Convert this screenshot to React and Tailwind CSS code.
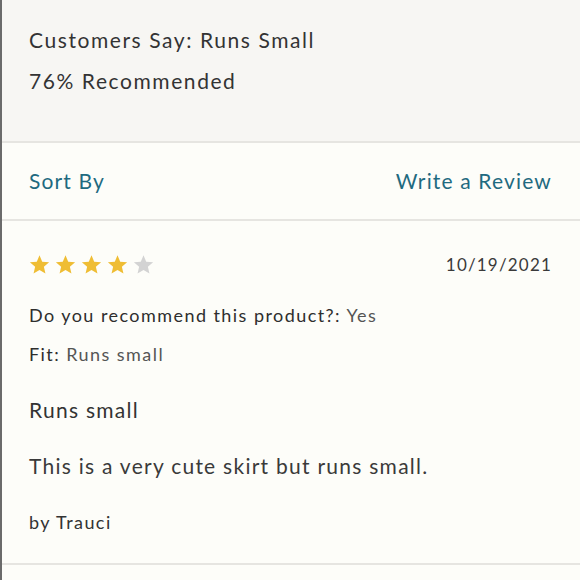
import React from "react";

const Star = ({ filled }) => (
  <svg
    className={`w-[21px] h-[21px] ${filled ? "text-[#efbd34]" : "text-[#d3d3d3]"}`}
    viewBox="0 0 24 24"
    fill="currentColor"
  >
    <path d="M12 1.5l3.09 7.26 7.91.66-6 5.2 1.8 7.73L12 18.3l-6.8 4.05 1.8-7.73-6-5.2 7.91-.66z" />
  </svg>
);

const App = () => {
  const rating = 4;

  return (
    <div
      className="w-[580px] h-[580px] overflow-hidden bg-[#fdfdf9] border-l-2 border-[#6b6b6b] text-[#333]"
      style={{ fontFamily: "Lato, 'Open Sans', sans-serif" }}
    >
      {/* Summary */}
      <div className="bg-[#f7f6f3] h-[143px] px-[27px] pt-[26px] border-b-2 border-[#e6e5e1]">
        <p className="text-[21px] leading-[28px] tracking-[0.075em]">Customers Say: Runs Small</p>
        <p className="text-[21px] leading-[28px] tracking-[0.075em] mt-[13px]">76% Recommended</p>
      </div>

      {/* Actions */}
      <div className="h-[78px] px-[27px] flex items-center justify-between border-b-2 border-[#e6e5e1] text-[#1f6a80] text-[21px] tracking-[0.055em]">
        <span>Sort By</span>
        <span className="mr-[1px]">Write a Review</span>
      </div>

      {/* Review */}
      <div className="h-[344px] px-[27px] pt-[31px] border-b-2 border-[#e6e5e1]">
        <div className="flex items-center justify-between">
          <div className="flex gap-[5px]">
            {[1, 2, 3, 4, 5].map((n) => (
              <Star key={n} filled={n <= rating} />
            ))}
          </div>
          <span className="text-[17px] tracking-[0.07em] mr-[1px] text-[#3a3a3a]">10/19/2021</span>
        </div>

        <p className="mt-[24px] text-[18px] tracking-[0.08em]">
          <span className="text-[#2e2e2e]">Do you recommend this product?:</span>{" "}
          <span className="text-[#555]">Yes</span>
        </p>
        <p className="mt-[12px] text-[18px] tracking-[0.08em]">
          <span className="text-[#2e2e2e]">Fit:</span> <span className="text-[#555]">Runs small</span>
        </p>

        <p className="mt-[26px] text-[21px] tracking-[0.06em]">Runs small</p>
        <p className="mt-[25px] text-[21px] tracking-[0.06em] text-[#3a3a3a]">
          This is a very cute skirt but runs small.
        </p>
        <p className="mt-[27px] text-[18px] tracking-[0.08em]">by Trauci</p>
      </div>
    </div>
  );
};

export default App;
